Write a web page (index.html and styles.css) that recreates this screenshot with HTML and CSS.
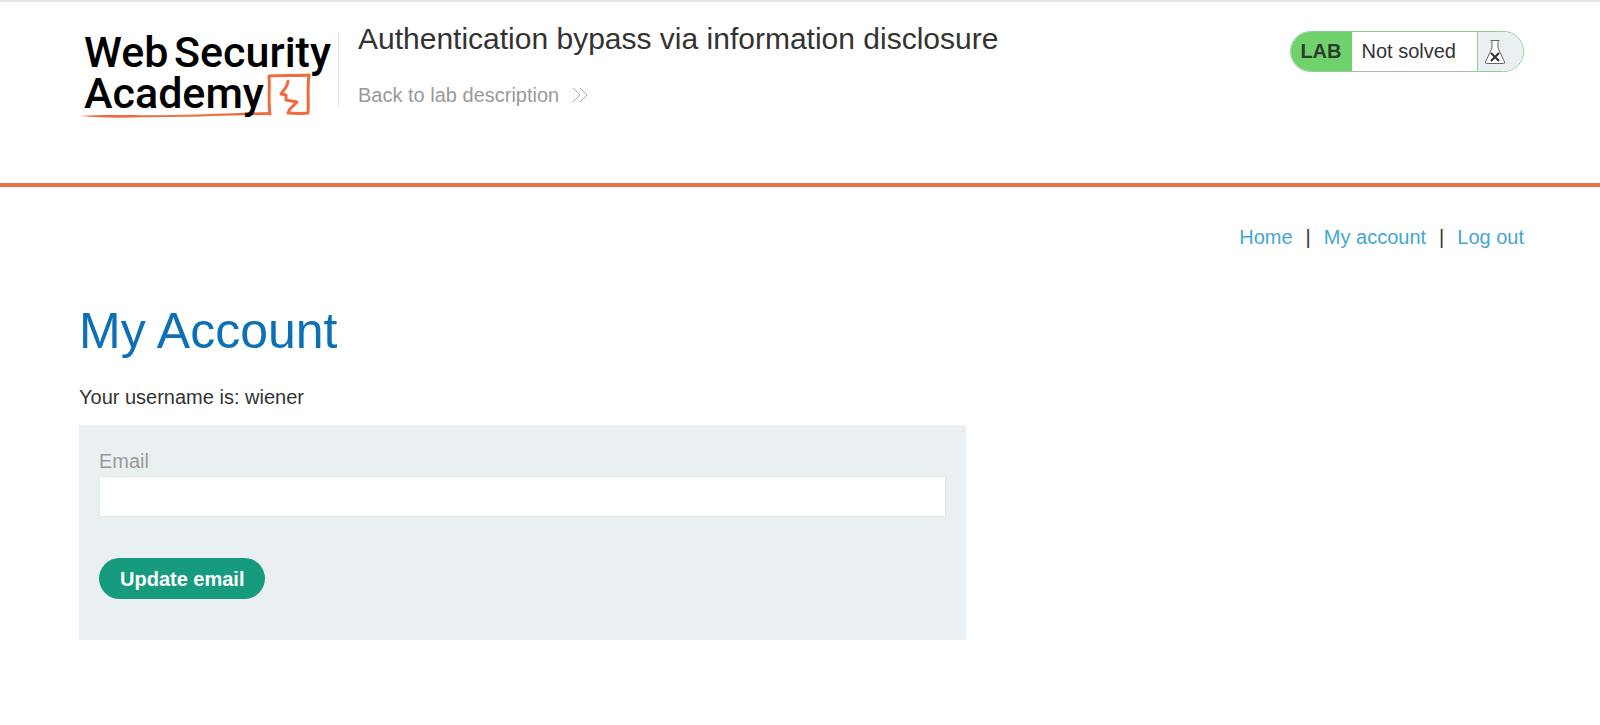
FILE: index.html
```html
<!DOCTYPE html>
<html lang="en">
<head>
<meta charset="utf-8">
<title>Authentication bypass via information disclosure</title>
<link rel="stylesheet" href="styles.css">
</head>
<body>
<header class="lab-header">
  <a class="logo" href="#" aria-label="Web Security Academy">
    <svg class="logo-art" viewBox="0 0 256 100" aria-hidden="true">
      <path class="logo-line" d="M190 92 C188 79 190 66 189 54 C202 53 216 54 229 53 C227 67 229 80 228 91 C221 92 214 91 208 91 L210 87 L217 80 C213 79 209 79 206 78 L206 73 L201 72 C204 68 208 64 208 59"/>
      <path class="logo-swoosh" d="M0 94 C30 92 60 94 95 93 S150 91 191 90 L191 93 C150 93 120 95 90 95 S30 97 0 94Z"/>
      <g class="logo-text">
        <text x="4" y="45">Web</text>
        <text x="94" y="45">Security</text>
        <text x="4" y="86">Academy</text>
      </g>
    </svg>
  </a>
  <div class="lab-title">
    <h2 class="title">Authentication bypass via information disclosure</h2>
    <a class="back" href="#">Back to lab description
      <svg class="chevrons" viewBox="0 0 16 16" aria-hidden="true"><path d="M1 1l7 7-7 7M8 1l7 7-7 7"/></svg>
    </a>
  </div>
  <div class="lab-status">
    <span class="status-tag">LAB</span>
    <span class="status-text">Not solved</span>
    <span class="status-icon">
      <svg class="flask" viewBox="0 0 22 26" aria-hidden="true">
        <path class="flask-body" d="M6.500 1.500h9M8 1.500V9L1.500 23q-.5 1.500 1 1.500h17q1.500 0 1-1.500L14 9V1.500"/>
        <path class="flask-cross" d="M7 14l8 8M15 14l-8 8"/>
      </svg>
    </span>
  </div>
</header>
<main class="page">
  <nav class="links">
    <a href="#">Home</a><span>|</span><a href="#">My account</a><span>|</span><a href="#">Log out</a>
  </nav>
  <h1 class="heading">My Account</h1>
  <p class="username">Your username is: wiener</p>
  <form class="email-form">
    <label class="label" for="email">Email</label>
    <input class="input" id="email" type="email" name="email">
    <button class="button" type="submit">Update email</button>
  </form>
</main>
</body>
</html>
```
FILE: styles.css
```css
* { box-sizing: border-box; }

body {
  margin: 0;
  border-top: 2px solid #e4e6e6;
  background: #fff;
  color: #333332;
  font: 20px/24px "Liberation Sans", Arial, sans-serif;
}

a { color: #44a6d3; text-decoration: none; }

.lab-header {
  display: flex;
  align-items: flex-start;
  min-height: 185px;
  padding: 19px 76px 0 80px;
  border-bottom: 4px solid #e8734a;
}

.logo {
  flex: none;
  margin-top: 1px;
}

.logo-art {
  display: block;
  width: 256px;
  height: 100px;
  overflow: visible;
}

.logo-text {
  fill: #000;
  font: 500 43px Roboto, sans-serif;
}

.logo-line {
  fill: none;
  stroke: #f06a3c;
  stroke-width: 3;
  stroke-linejoin: round;
  stroke-linecap: round;
}

.logo-swoosh { fill: #f06a3c; }

.lab-title {
  display: flex;
  flex: 1;
  flex-direction: column;
  align-items: flex-start;
  gap: 26px;
  padding-left: 22px;
  background: linear-gradient(#e2e4e4, #e2e4e4) 2px 11px / 1px 78px no-repeat;
}

.title {
  margin: 0;
  font-size: 30px;
  font-weight: 400;
  line-height: 36px;
}

.back {
  display: flex;
  align-items: center;
  gap: 13px;
  color: #999;
}

.chevrons {
  width: 16px;
  height: 16px;
  fill: none;
  stroke: #aaa;
}

.lab-status {
  display: flex;
  flex: none;
  height: 41px;
  margin-top: 10px;
  overflow: hidden;
  border: 1px solid #8fce8e;
  border-radius: 21px;
  line-height: 39px;
}

.status-tag {
  padding: 0 10px 0 9px;
  background: #70d26d;
  color: #2b3d2b;
  font-weight: 700;
}

.status-text { padding: 0 21px 0 10px; }

.status-icon {
  display: flex;
  align-items: center;
  padding: 0 17px 0 6px;
  border-left: 1px solid #8fce8e;
  background: #eaf0f2;
}

.flask {
  width: 22px;
  height: 26px;
}

.flask-body {
  fill: #fff;
  stroke: #666;
}

.flask-cross {
  fill: none;
  stroke: #333;
  stroke-width: 2;
}

.page { padding: 38px 76px 40px 79px; }

.links {
  display: flex;
  justify-content: flex-end;
  gap: 13px;
}

.heading {
  margin: 52px 0 24px;
  color: #0d70b7;
  font-size: 50px;
  font-weight: 400;
  line-height: 60px;
}

.username { margin: 0 0 16px; }

.email-form {
  max-width: 887px;
  padding: 24px 20px 41px;
  background: #eaf0f2;
}

.label {
  display: block;
  margin-bottom: 3px;
  color: #999;
}

.input {
  display: block;
  width: 100%;
  height: 41px;
  padding: 0 10px;
  border: 1px solid #e2e6e8;
  background: #fff;
  font: inherit;
}

.button {
  display: block;
  height: 41px;
  margin-top: 41px;
  padding: 0 21px;
  border: 0;
  border-radius: 21px;
  background: #179b7e;
  color: #fff;
  font: inherit;
  font-weight: 700;
}
```
